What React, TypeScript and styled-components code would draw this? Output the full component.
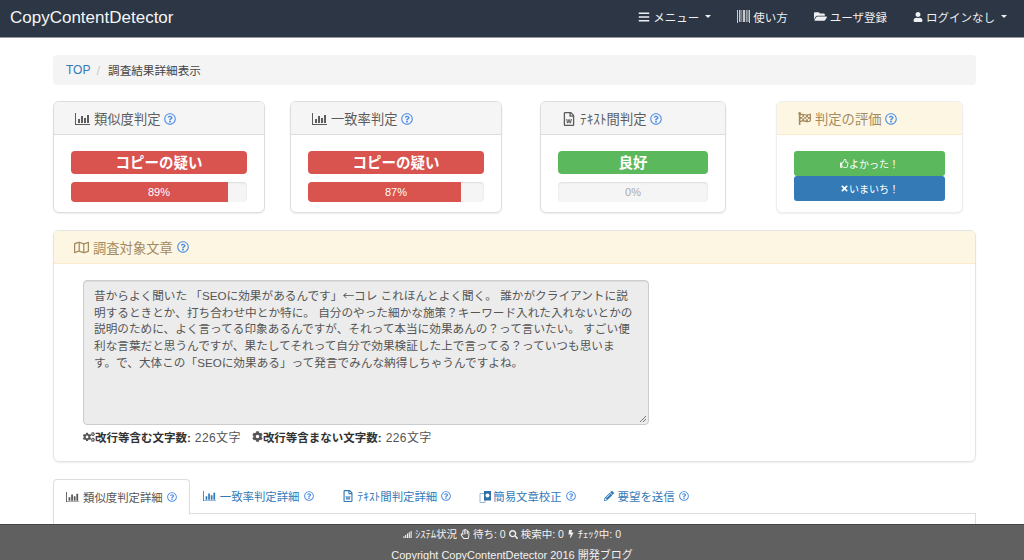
import React from "react";
import styled, { createGlobalStyle } from "styled-components";
import { FaBars, FaFolderOpen, FaUser, FaPencilAlt, FaTimes, FaBolt, FaCog, FaCogs, FaSearch, FaRegThumbsUp, FaRegHandPaper, FaSignal, FaRegFileWord, FaRegQuestionCircle, FaRegMap, FaFlagCheckered } from "react-icons/fa";

const Global = createGlobalStyle`
  html, body { margin: 0; padding: 0; height: 100%; overflow: hidden; background: #fff; }
  * { box-sizing: border-box; }
  body { font-family: "Liberation Sans", "Noto Sans CJK JP", sans-serif; font-size: 12px; color: #333; }
`;
const Page = styled.div`height: 560px; display: flex; flex-direction: column; overflow: hidden; position: relative;`;
const Nav = styled.nav`height: 38px; flex: none; background: #2c3644; border-bottom: 1px solid #999; display: flex; align-items: center; justify-content: space-between; padding: 0 17px 2px 10px; color: #fff;`;
const Brand = styled.div`font-size: 17px; color: #f4f5f6;`;
const NavList = styled.div`display: flex; align-items: center; gap: 26px; margin-bottom: 2px;`;
const NavItem = styled.div`display: flex; align-items: center; gap: 3px; font-size: 11.5px; color: #eef0f2; white-space: nowrap;`;
const Caret = styled.span`display: inline-block; margin-left: 3px; border-top: 3px solid #eee; border-left: 3px solid transparent; border-right: 3px solid transparent;`;
const Main = styled.main`padding: 17px 48px 0 53px; display: flex; flex-direction: column;`;
const Breadcrumb = styled.div`height: 30px; background: #f4f4f4; border-radius: 4px; display: flex; align-items: center; padding-left: 13px; font-size: 11.6px; margin-bottom: 16px; color: #444;`;
const Crumb = styled.span`color: #337ab7; font-size: 12px;`;
const Sep = styled.span`color: #ccc; margin: 0 8px 0 6px; font-size: 13px;`;
const Row = styled.div`display: flex; align-items: flex-start; margin-bottom: 17px;`;
const Panel = styled.section<{ $w: number; $ml?: number; $warn?: boolean }>`
  width: ${(p) => p.$w}px; margin-left: ${(p) => p.$ml ?? 0}px; flex: none;
  height: 112px; border: 1px solid ${(p) => (p.$warn ? "#eee" : "#ddd")}; border-radius: 6px; box-shadow: 0 1px 2px rgba(0,0,0,.07); overflow: hidden; background: #fff;
`;
const PanelHead = styled.div<{ $warn?: boolean }>`
  height: 33px; padding-top: 1px; background: ${(p) => (p.$warn ? "#fdf6e2" : "#f5f5f5")}; color: ${(p) => (p.$warn ? "#a38a5f" : "#5c5c5c")};
  border-bottom: 1px solid ${(p) => (p.$warn ? "#faebcc" : "#ddd")}; display: flex; align-items: center; gap: 4px; padding-left: 21px; font-size: 13.3px; white-space: nowrap;
`;
const Help = styled(FaRegQuestionCircle)`color: #4d8fe8; font-size: 12px;`;
const PanelBody = styled.div`padding: 16px 17px 0;`;
const Verdict = styled.div<{ $c: string }>`height: 23px; padding-bottom: 3px; border-radius: 4px; background: ${(p) => p.$c}; color: #fff; font-weight: 700; font-size: 14.5px; display: flex; align-items: center; justify-content: center;`;
const Track = styled.div`position: relative; height: 20px; margin-top: 8px; background: #f5f5f5; border-radius: 4px; box-shadow: inset 0 1px 2px rgba(0,0,0,.1); overflow: hidden; display: flex; align-items: center; justify-content: center; font-size: 11px; color: #aaa;`;
const Fill = styled.div`position: absolute; left: 0; top: 0; bottom: 0; background: #d9534f;`;
const FillLabel = styled.span`position: absolute; left: 0; right: 0; text-align: center; color: #fff; line-height: 20px;`;
const VoteBtn = styled.div<{ $c: string }>`height: 25px; background: ${(p) => p.$c}; color: #fff; font-size: 10px; display: flex; align-items: center; justify-content: center; border-radius: 3px;`;
const TextPanel = styled.section`height: 232px; border: 1px solid #e4e4e4; border-radius: 6px; box-shadow: 0 1px 2px rgba(0,0,0,.07); overflow: hidden; margin-bottom: 17px;`;
const TextHead = styled.div`height: 33px; background: #fdf6e2; border-bottom: 1px solid #faebcc; color: #a38a5f; display: flex; align-items: center; gap: 4px; padding-left: 20px; font-size: 13.3px;`;
const TextBody = styled.div`padding: 16px 29px 0;`;
const Area = styled.div`width: 566px; height: 145px; background: #ececec; border: 1px solid #ccc; border-radius: 4px; padding: 6px 10px; font-size: 11.65px; line-height: 16.7px; color: #555; position: relative; box-shadow: inset 0 1px 1px rgba(0,0,0,.07); white-space: pre-line; overflow: hidden;`;
const Arrow = styled.span`font-family: "Noto Sans CJK JP", sans-serif;`;
const Grip = styled.svg`position: absolute; right: 1px; bottom: 1px;`;
const Counts = styled.div`margin-top: 3px; font-size: 11.5px; color: #555; display: flex; gap: 11px;`;
const Count = styled.span`display: flex; align-items: center; b { color: #333; margin-right: 4px; }`;
const CountValue = styled.span`font-size: 12px; letter-spacing: .4px;`;
const Tabs = styled.div`display: flex; height: 35px; border-bottom: 1px solid #ddd; align-items: stretch; font-size: 11.4px;`;
const Tab = styled.div<{ $active?: boolean }>`
  display: flex; align-items: center; gap: 4px; padding: 0 13px; margin-right: 2px; color: ${(p) => (p.$active ? "#555" : "#337ab7")}; white-space: nowrap;
  ${(p) => p.$active && "background:#fff;border:1px solid #ddd;border-bottom-color:#fff;border-radius:4px 4px 0 0;height:36px;padding:0 12px;margin-right:0;"}
`;
const TabBody = styled.div`height: 12px; border-left: 1px solid #ddd; border-right: 1px solid #ddd;`;
const Footer = styled.footer`position: absolute; left: 0; right: 0; bottom: 0; height: 36px; background: #606060; border-top: 1px solid #444; color: #f2f2f2; font-size: 10.5px; text-align: center; padding-top: 2px; line-height: 14px;`;
const FootStats = styled.div`display: flex; align-items: center; justify-content: center; gap: 3px;`;
const Copy = styled.div`margin-top: 7px; font-size: 11px;`;
const SvgIcon = styled.svg`flex: none;`;
const CopyIcon = styled.svg`flex: none; margin-right: -3px;`;

const ChartIcon = ({ w = 15 }: { w?: number }) => (
  <SvgIcon width={w} height={(w * 12) / 15} viewBox="0 0 15 12" fill="currentColor">
    <path d="M0 0h1v11h14v1H0z" />
    <path d="M3 6h2v4H3zM6 3h2v7H6zM9 5h2v5H9zM12 2h2v8h-2z" />
  </SvgIcon>
);
const BarcodeIcon = () => (
  <SvgIcon width="13" height="13" viewBox="0 0 13 13" fill="currentColor">
    <path d="M0 0h1v13H0zM2 0h1.500v12H2zM4.500 0h.7v12h-.7zM6 0h2.200v12H6zM9 0h.7v12H9zM10.500 0h1v12h-1zM12 0h1v13h-1z" opacity=".8" />
  </SvgIcon>
);
const FilesIcon = () => (
  <CopyIcon width="13" height="13" viewBox="0 0 13 13">
    <path d="M1 3.500h5v9H1z" fill="none" stroke="#9db8d2" />
    <path d="M5 1h7v9.500H5z" fill="#2f6fa8" />
    <circle cx="8.500" cy="5.500" r="2" fill="#fff" />
  </CopyIcon>
);

const Stat = ({ icon, title, verdict, color, pct, w, ml }: { icon: React.ReactNode; title: React.ReactNode; verdict: string; color: string; pct: number; w: number; ml?: number }) => (
  <Panel $w={w} $ml={ml}>
    <PanelHead>{icon}{title}<Help /></PanelHead>
    <PanelBody>
      <Verdict $c={color}>{verdict}</Verdict>
      <Track>
        {pct > 0 ? <><Fill style={{ width: `${pct}%` }} /><FillLabel>{pct}%</FillLabel></> : "0%"}
      </Track>
    </PanelBody>
  </Panel>
);

export default function App() {
  return (
    <Page>
      <Global />
      <Nav>
        <Brand>CopyContentDetector</Brand>
        <NavList>
          <NavItem><FaBars size={12} /> メニュー<Caret /></NavItem>
          <NavItem><BarcodeIcon /> 使い方</NavItem>
          <NavItem><FaFolderOpen size={13} /> ユーザ登録</NavItem>
          <NavItem><FaUser size={10} /> ログインなし<Caret /></NavItem>
        </NavList>
      </Nav>
      <Main>
        <Breadcrumb><Crumb>TOP</Crumb><Sep>/</Sep>調査結果詳細表示</Breadcrumb>
        <Row>
          <Stat icon={<ChartIcon />} title="類似度判定" verdict="コピーの疑い" color="#d9534f" pct={89} w={212} />
          <Stat icon={<ChartIcon />} title="一致率判定" verdict="コピーの疑い" color="#d9534f" pct={87} w={212} ml={25} />
          <Stat icon={<FaRegFileWord size={14} />} title="ﾃｷｽﾄ間判定" verdict="良好" color="#5cb85c" pct={0} w={186} ml={38} />
          <Panel $w={187} $ml={50} $warn>
            <PanelHead $warn><FaFlagCheckered size={13} />判定の評価<Help /></PanelHead>
            <PanelBody>
              <VoteBtn $c="#5cb85c"><FaRegThumbsUp size={9} />よかった！</VoteBtn>
              <VoteBtn $c="#337ab7"><FaTimes size={9} />いまいち！</VoteBtn>
            </PanelBody>
          </Panel>
        </Row>
        <TextPanel>
          <TextHead><FaRegMap size={15} />調査対象文章<Help /></TextHead>
          <TextBody>
            <Area>
              昔からよく聞いた 「SEOに効果があるんです」<Arrow>←</Arrow>コレ これほんとよく聞く。 誰かがクライアントに説{"\n"}明するときとか、打ち合わせ中とか特に。 自分のやった細かな施策？キーワード入れた入れないとかの{"\n"}説明のために、よく言ってる印象あるんですが、それって本当に効果あんの？って言いたい。 すごい便{"\n"}利な言葉だと思うんですが、果たしてそれって自分で効果検証した上で言ってる？っていつも思いま{"\n"}す。で、大体この「SEOに効果ある」って発言でみんな納得しちゃうんですよね。
              <Grip width="10" height="10" viewBox="0 0 10 10"><path d="M9 3 3 9M9 6 6 9" stroke="#777" strokeWidth="1" /></Grip>
            </Area>
            <Counts>
              <Count><FaCogs size={12} /><b>改行等含む文字数:</b><CountValue>226文字</CountValue></Count>
              <Count><FaCog size={11} /><b>改行等含まない文字数:</b><CountValue>226文字</CountValue></Count>
            </Counts>
          </TextBody>
        </TextPanel>
        <Tabs>
          <Tab $active><ChartIcon w={13} />類似度判定詳細<Help size={10} /></Tab>
          <Tab><ChartIcon w={13} />一致率判定詳細<Help size={10} /></Tab>
          <Tab><FaRegFileWord size={12} />ﾃｷｽﾄ間判定詳細<Help size={10} /></Tab>
          <Tab><FilesIcon />簡易文章校正<Help size={10} /></Tab>
          <Tab><FaPencilAlt size={10} />要望を送信<Help size={10} /></Tab>
        </Tabs>
        <TabBody />
      </Main>
      <Footer>
        <FootStats><FaSignal size={9} /> ｼｽﾃﾑ状況 <FaRegHandPaper size={10} /> 待ち: 0 <FaSearch size={9} /> 検索中: 0 <FaBolt size={8} /> ﾁｪｯｸ中: 0</FootStats>
        <Copy>Copyright CopyContentDetector 2016 開発ブログ</Copy>
      </Footer>
    </Page>
  );
}
